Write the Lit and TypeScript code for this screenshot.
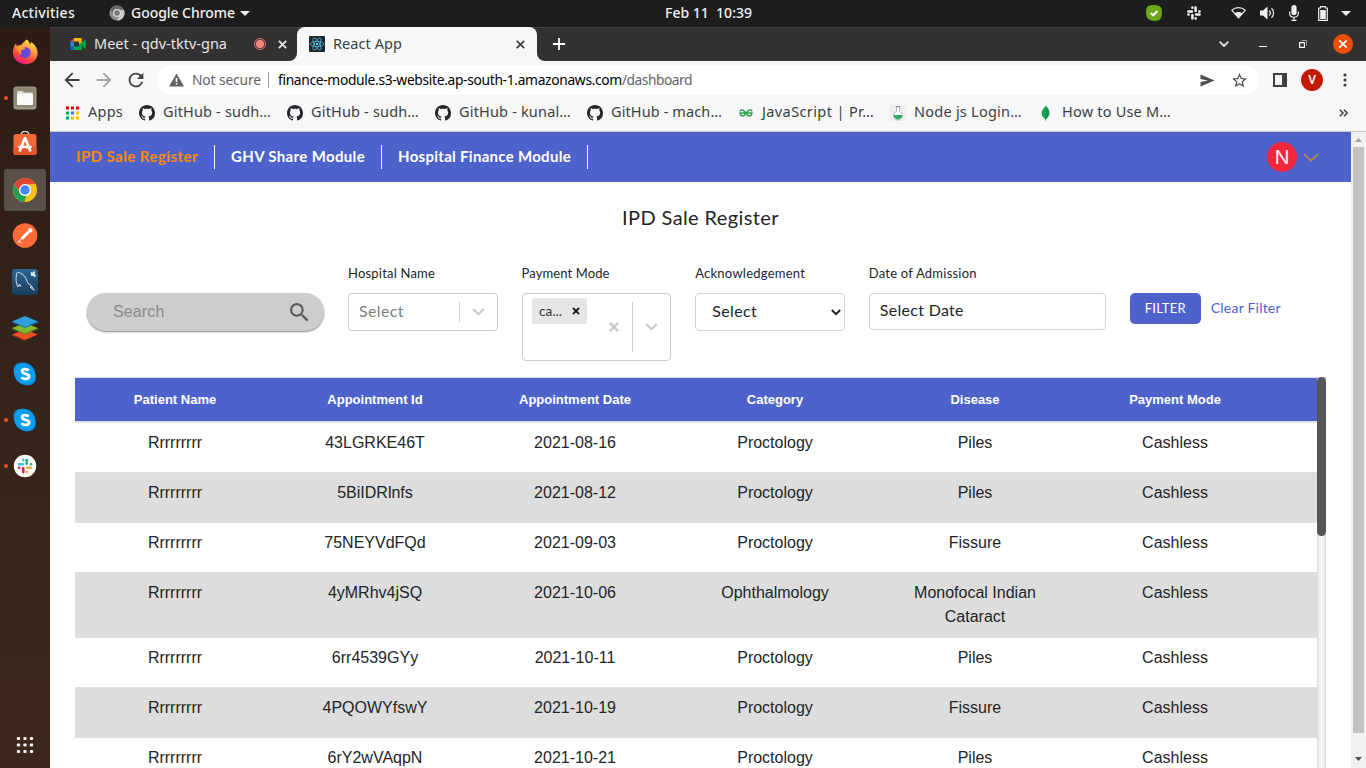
import { LitElement, html, css, svg } from "lit";
import { customElement, property } from "lit/decorators.js";
import { classMap } from "lit/directives/class-map.js";

/** Inline label that spreads its letters evenly over a given width. */
@customElement("fit-label")
class FitLabel extends LitElement {
  @property({ type: Number }) width = 0;
  @property() text = "";
  static styles = css`
    :host { display: inline-block; white-space: pre; flex: none; }
    .t { display: inline-block; white-space: pre; }
  `;
  render() {
    return html`<span class="t">${this.text}</span>`;
  }
  updated() {
    const t = this.renderRoot.querySelector(".t") as HTMLElement;
    t.style.letterSpacing = "0px";
    const natural = t.getBoundingClientRect().width;
    const step = (this.width - natural) / Math.max(1, this.text.length);
    t.style.letterSpacing = `${step.toFixed(3)}px`;
  }
}

const fit = (text: string, width: number) =>
  html`<fit-label .text=${text} .width=${width}></fit-label>`;

const github = svg`<path fill="#24292f" d="M8 0C3.58 0 0 3.58 0 8c0 3.54 2.29 6.53 5.47 7.59.4.07.55-.17.55-.38 0-.19-.01-.82-.01-1.49-2.01.37-2.53-.49-2.69-.94-.09-.23-.48-.94-.82-1.13-.28-.15-.68-.52-.01-.53.63-.01 1.08.58 1.23.82.72 1.21 1.87.87 2.33.66.07-.52.28-.87.51-1.07-1.78-.2-3.64-.89-3.64-3.95 0-.87.31-1.59.82-2.15-.08-.2-.36-1.02.08-2.12 0 0 .67-.21 2.2.82.64-.18 1.32-.27 2-.27s1.36.09 2 .27c1.53-1.04 2.2-.82 2.2-.82.44 1.1.16 1.92.08 2.12.51.56.82 1.27.82 2.15 0 3.07-1.87 3.75-3.65 3.95.29.25.54.73.54 1.48 0 1.07-.01 1.93-.01 2.2 0 .21.15.46.55.38A8.01 8.01 0 0 0 16 8c0-4.42-3.58-8-8-8z"/>`;
const appsGrid = svg`
  <path fill="#e00" d="M2 1.500h3v3H2zM7 1.500h3v3H7z"/><path fill="#e00" d="M12 1.500h3v3h-3z"/>
  <path fill="#00a651" d="M2 6.500h3v3H2z"/><path fill="#3b6cf6" d="M7 6.500h3v3H7z"/><path fill="#fb0" d="M12 6.500h3v3h-3z"/>
  <path fill="#00a651" d="M2 11.500h3v3H2z"/><path fill="#fb0" d="M7 11.500h3v3H7zM12 11.500h3v3h-3z"/>`;
const gfg = svg`<g fill="none" stroke="#2fa24f" stroke-width="1.500"><path d="M1.300 8h13.400M1.800 6.200c1.300-1.600 3.300-1.300 4.500 0L8 8M14.200 6.200c-1.300-1.600-3.300-1.300-4.500 0L8 8M2.200 8c0 3.400 3.600 3.600 4.800 1.600V8M13.800 8c0 3.400-3.600 3.600-4.800 1.600V8"/></g>`;
const flask = svg`<path fill="#eee" d="M0 0h16v16H0z"/><path fill="#fff" stroke="#b9b3c4" d="M6.500 1.500v5a4.400 4.400 0 1 0 3 0v-5"/><path fill="#27ae60" d="M3.600 10h8.800a4.400 4.400 0 0 1-8.800 0z"/><path stroke="#8d8799" stroke-width="1.200" d="M5.800 1.600h4.400"/>`;
const leaf = svg`<path fill="#10aa50" d="M7.500.5c2.500 2.800 4.300 5 3.800 8.300-.3 2.300-1.700 4-3.400 5.200l-.1 1.800h-.6l-.2-1.800C5 12.700 3.500 10.800 3.600 8.300 3.700 5 6 3.500 7.500.5z"/><path fill="#12924f" d="M7.500 1v14l.4-1c1.700-1.200 3.100-2.900 3.400-5.200C11.800 5.500 10 3.500 7.500 1z"/>`;

const bookmarks = [
  { icon: appsGrid, text: "Apps", w: 35 },
  { icon: github, text: "GitHub - sudh…", w: 108 },
  { icon: github, text: "GitHub - sudh…", w: 108 },
  { icon: github, text: "GitHub - kunal…", w: 112 },
  { icon: github, text: "GitHub - mach…", w: 111 },
  { icon: gfg, text: "JavaScript | Pr…", w: 112 },
  { icon: flask, text: "Node js Login…", w: 108 },
  { icon: leaf, text: "How to Use M…", w: 109 },
];

const slackMark = (a: string, b: string, c: string, d: string) => svg`
  <g stroke-linecap="round" stroke-width="3.600" fill="none">
    <path stroke="${a}" d="M2 7.700h5M7.700 2v.4"/>
    <path stroke="${b}" d="M12.300 2v5M17.600 7.700h.4"/>
    <path stroke="${c}" d="M18 12.300h-5M12.300 17.600v.4"/>
    <path stroke="${d}" d="M7.700 18v-5M2 12.300h.4"/>
  </g>`;

const skype = svg`
  <path fill="#0b7fd0" d="M7.200 2c7-2 15 2 16 10 2 6 0 11-5 12-7 2-15-3-16-11C.5 8 2 3 7.200 2z"/>
  <path fill="#0a9df0" d="M8.500 2.500c-4 .6-6.700 4-6.300 9.500.5 7 6.500 12 13 11.500 6-.4 9-5 8-11-1-7-7.500-11-14.700-10z"/>
  <path fill="none" stroke="#fff" stroke-width="2.800" d="M16.400 9.600c-1-2-6.300-2.200-6.300.6 0 3.400 7 1.800 7 5.200 0 3.200-6.200 3.200-7.600.7"/>`;

const dock = [
  { dot: false, on: false, art: svg`
    <defs><linearGradient id="f" x1=".8" y1="0" x2=".3" y2="1"><stop offset="0" stop-color="#fff44f"/><stop offset=".4" stop-color="#ff9640"/><stop offset=".7" stop-color="#ff4a3c"/><stop offset="1" stop-color="#e31587"/></linearGradient></defs>
    <path fill="url(#f)" d="M14.500.5c2 1 3 3 3.300 4.600 1-.3 1.200-1.200 1.200-2 4 2.500 7 7 6.600 12C25 21 20 25.500 13.500 25.200 6.500 25 1 20.600.9 13.500c0-3.500 1-6.500 3-9l.8 2.600C6 6 7.500 5.700 9 6c1-.6 3-3.400 5.500-5.500z"/>
    <circle cx="13" cy="13.500" r="5.600" fill="#6a45d8"/><path fill="#ff9c2b" d="M4.500 8c3-1.500 6-.3 9 .8-.5 1.500-2.200 1.800-4 2.300-1 2-.8 3.200.5 4.500-3-.5-5-3.500-5.500-7.600z"/>` },
  { dot: true, on: false, art: svg`
    <rect x="1.500" y="1.500" width="23" height="23" rx="3" fill="#a29c87"/><rect x="2.500" y="2.500" width="21" height="20" rx="2.500" fill="#8d8773"/>
    <path fill="#dcd9d0" d="M5 7.500c0-1 .6-1.500 1.500-1.500h4l1.500 1.500h7.500c1 0 1.500.6 1.500 1.500v9.500c0 1-.6 1.500-1.500 1.500h-13C5.500 20 5 19.500 5 18.500z"/><rect x="5" y="8.500" width="16" height="11.500" rx="1.500" fill="#faf9f7"/>` },
  { dot: false, on: false, art: svg`
    <path d="M9 4c0-5 8-5 8 0" fill="none" stroke="#e6dccd" stroke-width="1.300"/><rect x="1.500" y="3" width="23" height="21" rx="2.500" fill="#ee6a3a"/><path d="M1.500 16h23v5.500a2.500 2.500 0 0 1-2.500 2.500H4a2.500 2.500 0 0 1-2.500-2.500z" fill="#e4552a"/>
    <path fill="none" stroke="#fff" stroke-width="2.600" d="M7.500 20.500l5.300-13.200h.4l5.300 13.200M6.500 16h13"/>` },
  { dot: true, on: true, art: svg`
    <circle cx="13" cy="13" r="12" fill="#fbc116"/><path fill="#e04436" d="M2.600 7A12 12 0 0 1 23.400 7H13z"/><path fill="#e04436" d="M2.600 7H23.400L13 7.500 8 16z"/>
    <path fill="#1fa054" d="M2.600 7l5.200 9L13 19l1 .2L12.500 25A12 12 0 0 1 2.600 7z"/><circle cx="13" cy="13" r="6" fill="#fff"/><circle cx="13" cy="13" r="4.700" fill="#4285f4"/>` },
  { dot: false, on: false, art: svg`
    <circle cx="13" cy="12.500" r="12.300" fill="#ff6c37"/><path stroke="#fff" stroke-width="3" stroke-linecap="round" d="M10.500 15l5.500-5.500"/><path fill="none" stroke="#fff" stroke-width="1" d="M6 19h3.500M6 19l4.500-4.500"/><circle cx="18.300" cy="7.300" r="2.200" fill="#fff"/>` },
  { dot: false, on: false, art: svg`
    <defs><linearGradient id="q" x1="0" y1="0" x2="0" y2="1"><stop offset="0" stop-color="#2d6593"/><stop offset="1" stop-color="#183c5c"/></linearGradient></defs>
    <rect x="0" y="0" width="26" height="26" rx="3" fill="url(#q)"/><path fill="none" stroke="#dce6ee" stroke-width="1" d="M9 18l-1.500-3-1.500 3C3.500 13 4 9 4.500 5.500 4 3 7 3 9 4.500c5 2 5.500 8 7.500 10.500 2 .5 3.500 2 3.500 3l2.500 3.500M20 18h-2l3.500 3"/><path stroke="#dce6ee" stroke-width="2" d="M19 3.500l4.500 4M19 6h3V2.500"/>` },
  { dot: false, on: false, art: svg`
    <path fill="#e84f27" d="M0 19.500l13-5 13 5-13 5.500z"/><path fill="#b5331c" d="M0 19.500L13 25v1L0 20.500z"/><path fill="#83b82c" d="M0 13l13-5 13 5-13 5.500z"/><path fill="#5f911d" d="M0 13l13 5.500L26 13v1l-13 5.500L0 14z"/><path fill="#2f9fe0" d="M0 6.500L13 1l13 5.500L13 12z"/><path fill="#1674b5" d="M0 6.500L13 12l13-5.500v1L13 13 0 7.500z"/>` },
  { dot: false, on: false, art: skype },
  { dot: true, on: false, art: skype },
  { dot: true, on: false, art: svg`<circle cx="13" cy="13" r="11.200" fill="#fff"/><g transform="translate(5.400 5.400) scale(.76)">${slackMark("#36c5f0", "#2eb67d", "#ecb22e", "#e01e5a")}</g>` },
];

const columns = ["Patient Name", "Appointment Id", "Appointment Date", "Category", "Disease", "Payment Mode"];
const rows = [
  ["Rrrrrrrrr", "43LGRKE46T", "2021-08-16", "Proctology", "Piles", "Cashless"],
  ["Rrrrrrrrr", "5BiIDRlnfs", "2021-08-12", "Proctology", "Piles", "Cashless"],
  ["Rrrrrrrrr", "75NEYVdFQd", "2021-09-03", "Proctology", "Fissure", "Cashless"],
  ["Rrrrrrrrr", "4yMRhv4jSQ", "2021-10-06", "Ophthalmology", "Monofocal Indian Cataract", "Cashless"],
  ["Rrrrrrrrr", "6rr4539GYy", "2021-10-11", "Proctology", "Piles", "Cashless"],
  ["Rrrrrrrrr", "4PQOWYfswY", "2021-10-19", "Proctology", "Fissure", "Cashless"],
  ["Rrrrrrrrr", "6rY2wVAqpN", "2021-10-21", "Proctology", "Piles", "Cashless"],
];

@customElement("desktop-bar")
class DesktopBar extends LitElement {
  static styles = css`
    :host { display: grid; grid-template-columns: 1fr auto 1fr; align-items: start; height: 27px; background: #1d1d1d; color: #f0f0f0; font: 500 14px/26px "Noto Sans", sans-serif; }
    svg { display: block; flex: none; }
    .left, .right { display: flex; align-items: center; height: 26px; }
    .left { padding-left: 12px; }
    fit-label { height: 26px; line-height: 25px; }
    .app { margin: 0 6px 0 34px; }
    .caret { margin-left: 5px; }
    .right { justify-content: flex-end; padding-right: 15px; }
    .skype { margin-right: 25px; }
    .slack { margin-right: 30px; }
    .wifi { margin-right: 14px; }
    .vol { margin-right: 14px; }
    .mic { margin-right: 19px; }
    .bat { margin-right: 13px; }
    .clock { padding-left: 51px; }
  `;
  render() {
    return html`
      <div class="left">
        ${fit("Activities", 63)}
        <svg class="app" width="16" height="16" viewBox="0 0 16 16"><circle cx="8" cy="8" r="7.600" fill="#8b8b8b"/><path fill="#686868" d="M1.500 4A7.600 7.600 0 0 1 14.700 4.500H8L4.800 9.500z"/><path fill="#c9c9c9" d="M15 5a7.600 7.600 0 0 1-7 10.600l3.500-6.600V5z"/><circle cx="8" cy="8" r="4" fill="#ddd"/><circle cx="8" cy="8" r="2.800" fill="#777"/></svg>
        ${fit("Google Chrome", 104)}
        <svg class="caret" width="10" height="5" viewBox="0 0 10 5"><path fill="#f0f0f0" d="M0 0h10L5 5z"/></svg>
      </div>
      <div class="clock">${fit("Feb 11  10:39", 87)}</div>
      <div class="right">
        <svg class="skype" width="16" height="16" viewBox="0 0 16 16"><path fill="#69a917" d="M5 .2C9-.4 13 0 15 2.500c1.500 3 1 8 0 10.500-1.500 3-6 3.500-10 2.500C1 14 0 11 0 7 0 2.500 1.500.5 5 .2z"/><path fill="none" stroke="#fff" stroke-width="2" d="M4.700 8l2.400 2.300L11.500 6"/></svg>
        <svg class="slack" width="14" height="14" viewBox="0 0 20 20">${slackMark("#f0f0f0", "#f0f0f0", "#f0f0f0", "#f0f0f0")}</svg>
        <svg class="wifi" width="15" height="12" viewBox="0 0 15 12"><path fill="none" stroke="#f0f0f0" stroke-width="1.100" d="M.8 3.200C4.500-.2 10.500-.2 14.200 3.200L7.500 11z"/><path fill="#f0f0f0" d="M3.600 6.300c2.300-1.600 5.500-1.600 7.800 0L7.500 11.500z"/></svg>
        <svg class="vol" width="15" height="14" viewBox="0 0 15 14"><path fill="#f0f0f0" d="M0 4.500h3L7.500.5v13L3 9.500H0z"/><path fill="none" stroke="#f0f0f0" stroke-width="1.200" d="M9.300 4.500c1.300 1.500 1.300 3.500 0 5M11.500 2.300c2.800 2.600 2.800 6.800 0 9.400"/></svg>
        <svg class="mic" width="10" height="16" viewBox="0 0 10 16"><rect x="2.400" y="0" width="5.200" height="10" rx="2.600" fill="#f0f0f0"/><path fill="none" stroke="#f0f0f0" stroke-width="1.200" d="M.7 6.500v2c0 5 8.600 5 8.600 0v-2M5 12v3M2.500 15.300h5"/></svg>
        <svg class="bat" width="10" height="15" viewBox="0 0 10 15"><path fill="none" stroke="#f0f0f0" stroke-width="1.200" d="M.7 2h2V.6h4.600V2h2v12.300H.7z"/><path fill="#f0f0f0" d="M2.200 4h5.600v9H2.200z"/></svg>
        <svg width="10" height="5" viewBox="0 0 10 5"><path fill="#f0f0f0" d="M0 0h10L5 5z"/></svg>
      </div>`;
  }
}

@customElement("app-dock")
class AppDock extends LitElement {
  static styles = css`
    :host { display: flex; flex-direction: column; width: 50px; box-sizing: border-box; padding-top: 2px; background: linear-gradient(#2c1c15, #34231a 40%, #3d291c); }
    .slot { height: 46px; display: grid; grid-template-columns: 4px 42px 4px; align-items: center; }
    .dot { width: 4px; height: 4px; border-radius: 50%; margin-left: 3.500px; }
    .run .dot { background: #e95420; }
    .tile { height: 42px; border-radius: 3px; display: grid; place-items: center; }
    .on .tile { background: #5b4f49; }
    svg { display: block; }
    .grid { margin: auto 0 14px 16px; }
  `;
  render() {
    return html`
      ${dock.map((d) => html`<div class=${classMap({ slot: true, run: d.dot, on: d.on })}>
        <span class="dot"></span><span class="tile"><svg width="26" height="26" viewBox="0 0 26 26">${d.art}</svg></span></div>`)}
      <svg class="grid" width="18" height="18" viewBox="0 0 18 18">
        ${[2.5, 9, 15.5].map((y) => [2.5, 9, 15.5].map((x) => svg`<rect x="${x - 1.6}" y="${y - 1.6}" width="3.200" height="3.200" rx=".8" fill="#f2efec"/>`))}
      </svg>`;
  }
}

@customElement("browser-chrome")
class BrowserChrome extends LitElement {
  static styles = css`
    :host { display: block; font: 14.500px/20px "Noto Sans", sans-serif; color: #3c4043; }
    svg { display: block; flex: none; }
    .tabs { display: flex; align-items: center; height: 34px; background: #333132; box-shadow: inset 0 1px #454344; }
    .tab { box-sizing: border-box; height: 34px; display: flex; align-items: center; }
    .tab fit-label { padding-bottom: 2px; }
    .meet { width: 247px; padding-left: 20px; color: #e6e6e6; background: #333132; border-bottom-right-radius: 8px; box-shadow: inset 0 1px #454344; }
    .under { background: #f7f7f7; width: 247px; }
    .meet .gap { width: 27px; }
    .react { width: 240px; padding-left: 12px; background: #f7f7f7; border-radius: 8px 8px 0 0; }
    .react .gap { flex: 1; }
    .react .x { margin-right: 12px; }
    .fav { margin-right: 8px; }
    .rec { margin-right: 12px; }
    .after { flex: 1; display: flex; align-items: center; height: 34px; padding: 0 13px 0 16px; background: #333132; border-bottom-left-radius: 8px; box-shadow: inset 0 1px #454344; }
    .afterwrap { flex: 1; display: flex; background: #f7f7f7; }
    .sp { flex: 1; }
    .down { margin-right: 30px; }
    .min { margin-right: 32px; }
    .res { margin-right: 26px; }
    .tools { display: flex; align-items: center; height: 38px; background: #f7f7f7; padding-left: 14px; }
    .back { margin-right: 16px; }
    .fwd { margin-right: 16px; }
    .re { margin-right: 14px; }
    .omni { display: flex; align-items: center; width: 1100px; height: 30px; border-radius: 15px; background: #fff; box-sizing: border-box; padding: 0 11px; font-size: 13.800px; }
    .omni fit-label { padding-bottom: 1px; }
    .warn { margin-right: 8px; }
    .ns { color: #5f6368; }
    .bar { width: 1px; height: 16px; background: #9aa0a6; margin: 0 9px 0 7px; }
    .host { color: #000; }
    .path { color: #5f6368; }
    .send { margin-right: 17px; }
    .panel { margin: 0 14px 0 15px; }
    .me { width: 22px; height: 22px; border-radius: 50%; background: #c41c00; color: #fff; font: 500 12px/22px Roboto, sans-serif; text-align: center; margin-right: 20px; }
    .marks { display: flex; align-items: center; gap: 16px; height: 32px; box-sizing: border-box; padding: 0 18px 4px 14px; background: #f7f7f7; }
    .edge { height: 1px; background: #c9cace; }
    .mark { display: flex; align-items: center; gap: 8px; }
    .mark fit-label { height: 20px; margin: -2px 0 0; padding-bottom: 2px; }
  `;
  render() {
    const close = (c: string) => html`<svg class="x" width="9" height="9" viewBox="0 0 9 9"><path stroke="${c}" stroke-width="1.700" d="M.8.8l7.400 7.400M8.200.8L.8 8.200"/></svg>`;
    return html`
      <div class="tabs">
        <div class="under"><div class="tab meet">
          <svg class="fav" width="16" height="16" viewBox="0 0 16 16"><path fill="#00ac47" d="M11 8l3.800-4.400c.4-.3.800 0 .8.500v7.800c0 .5-.4.800-.8.5z"/><path fill="#0066da" d="M.5 10.500h3.500V14H1.800C1 14 .5 13.500.5 12.700z"/><path fill="#e94235" d="M.5 5.500L4 2v3.500z"/><path fill="#2684fc" d="M.5 5.500H4v5H.5z"/><path fill="#ffba00" d="M4 2h6.500c.8 0 1.300.5 1.300 1.300V7L9 8V5.500H4z"/><path fill="#00ac47" d="M4 10.500h5V8l2.800-1v5.700c0 .8-.5 1.300-1.300 1.300H4z"/></svg>
          ${fit("Meet - qdv-tktv-gna", 133)}<span class="gap"></span>
          <svg class="rec" width="12" height="12" viewBox="0 0 12 12"><circle cx="6" cy="6" r="4.200" fill="#f6837c"/><circle cx="6" cy="6" r="5.500" fill="none" stroke="#f6837c" stroke-width=".8"/></svg>
          ${close("#e8e8e8")}
        </div></div>
        <div class="tab react">
          <svg class="fav" width="16" height="16" viewBox="0 0 16 16"><rect width="16" height="16" rx="1" fill="#20232a"/><g fill="none" stroke="#5ccfee" stroke-width=".7"><ellipse cx="8" cy="8" rx="6.800" ry="2.600"/><ellipse cx="8" cy="8" rx="6.800" ry="2.600" transform="rotate(60 8 8)"/><ellipse cx="8" cy="8" rx="6.800" ry="2.600" transform="rotate(120 8 8)"/></g><circle cx="8" cy="8" r="1.200" fill="#61dafb"/></svg>
          ${fit("React App", 69)}<span class="gap"></span>${close("#3c4043")}
        </div>
        <div class="afterwrap"><div class="after">
          <svg width="12" height="12" viewBox="0 0 12 12"><path stroke="#fff" stroke-width="1.800" d="M6 0v12M0 6h12"/></svg>
          <span class="sp"></span>
          <svg class="down" width="10" height="6" viewBox="0 0 10 6"><path fill="none" stroke="#f0f0f0" stroke-width="1.700" d="M.7.700L5 5 9.300.7"/></svg>
          <svg class="min" width="8" height="8" viewBox="0 0 8 8"><path fill="#f0f0f0" d="M0 6h8v1H0z"/></svg>
          <svg class="res" width="8" height="8" viewBox="0 0 8 8"><path fill="none" stroke="#fff" stroke-width="1.100" d="M.6 2.600h4.800v4.800H.6z"/><path fill="none" stroke="#aaa" stroke-width=".9" d="M2.500.5h5v5"/></svg>
          <svg width="20" height="20" viewBox="0 0 20 20"><circle cx="10" cy="10" r="10" fill="#ee4d0b"/><path stroke="#fff" stroke-width="1.700" d="M6.300 6.300l7.400 7.400M13.700 6.300l-7.400 7.400"/></svg>
        </div></div>
      </div>
      <div class="tools">
        <svg class="back" width="16" height="16" viewBox="3.500 3.500 17 17"><path fill="#3c4043" d="M20 11H7.830l5.590-5.590L12 4l-8 8 8 8 1.410-1.410L7.830 13H20z"/></svg>
        <svg class="fwd" width="16" height="16" viewBox="3.500 3.500 17 17"><path fill="#a4a6a8" d="M12 4l-1.410 1.410L16.170 11H4v2h12.170l-5.580 5.590L12 20l8-8z"/></svg>
        <svg class="re" width="16" height="16" viewBox="3.300 3.300 17.400 17.400"><path fill="#3c4043" d="M17.650 6.350A7.960 7.960 0 0 0 12 4a8 8 0 1 0 7.730 10h-2.080A6 6 0 1 1 12 6c1.660 0 3.140.69 4.220 1.780L13 11h7V4z"/></svg>
        <div class="omni">
          <svg class="warn" width="15" height="14" viewBox="0 0 15 14"><path fill="#5f6368" d="M7.500.5L15 13.500H0z"/><path fill="#fff" d="M6.700 5h1.600v4H6.700zM6.700 10h1.600v1.600H6.700z"/></svg>
          <span class="ns">${fit("Not secure", 69)}</span><span class="bar"></span>
          <span class="host">${fit("finance-module.s3-website.ap-south-1.amazonaws.com", 344)}</span><span class="path">${fit("/dashboard", 70)}</span>
          <span class="sp"></span>
          <svg class="send" width="15" height="13" viewBox="0 0 15 13"><path fill="#4a4d51" d="M.5.5L14.500 6.500.5 12.500V8L8 6.500.5 5z"/></svg>
          <svg width="15" height="15" viewBox="2 2 20 20"><path fill="#4a4d51" d="M22 9.240l-7.190-.62L12 2 9.190 8.630 2 9.240l5.460 4.730L5.820 21 12 17.270 18.180 21l-1.630-7.030zM12 15.400l-3.760 2.270 1-4.280-3.320-2.880 4.380-.38L12 6.100l1.710 4.040 4.380.38-3.320 2.880 1 4.280z"/></svg>
        </div>
        <svg class="panel" width="14" height="14" viewBox="0 0 14 14"><path fill="#3c4043" d="M0 0h14v14H0zM2 2v10h7V2z" fill-rule="evenodd"/></svg>
        <span class="me">V</span>
        <svg width="4" height="14" viewBox="0 0 4 14"><g fill="#3c4043"><circle cx="2" cy="2" r="1.600"/><circle cx="2" cy="7" r="1.600"/><circle cx="2" cy="12" r="1.600"/></g></svg>
      </div>
      <div class="marks">
        ${bookmarks.map((b) => html`<div class="mark"><svg width="16" height="16" viewBox="0 0 16 16">${b.icon}</svg>${fit(b.text, b.w)}</div>`)}
        <span class="sp"></span>
        <svg width="9" height="8" viewBox="0 0 9 8"><path fill="none" stroke="#3c4043" stroke-width="1.500" d="M.8.800L4 4 .8 7.200M5 .800L8.200 4 5 7.200"/></svg>
      </div>
      <div class="edge"></div>`;
  }
}

@customElement("sale-page")
class SalePage extends LitElement {
  static styles = css`
    :host { display: block; background: #fff; color: #212529; font: 16px/24px Lato, sans-serif; overflow: hidden; }
    svg { display: block; flex: none; }
    .nav { display: flex; align-items: center; height: 50px; background: #4d63cb; color: #fff; font-weight: 700; font-size: 15px; padding-left: 26px; }
    .item { display: flex; align-items: center; height: 24px; padding-right: 16px; margin-right: 16px; border-right: 1px solid #fff; }
    .item fit-label { padding-bottom: 2px; }
    .item.cur { color: #f98a06; }
    .sp { flex: 1; }
    .user { width: 30px; height: 30px; border-radius: 50%; background: #f3263c; font: 20px/29px "Noto Sans", sans-serif; text-align: center; margin-right: 6px; }
    .chev { margin-right: 32px; }
    .title { display: flex; justify-content: center; font-size: 20px; line-height: 24px; padding-top: 23px; }
    .filters { display: flex; gap: 24px; height: 114px; padding: 46px 0 0 37px; margin-top: -12px; }
    .field { display: flex; flex-direction: column; width: 149.600px; }
    .wide { width: 237px; }
    .lab { height: 30px; font-size: 13px; line-height: 20px; }
    .lab fit-label { vertical-align: top; }
    .search { display: flex; align-items: center; height: 38px; border-radius: 19px; background: #cdcdcd; color: #8b8b8b; box-shadow: 0 1px 2px #8a8a8a; font-family: "Liberation Sans", sans-serif; padding: 0 14px 0 26px; justify-content: space-between; }
    .box { display: flex; align-items: center; box-sizing: border-box; height: 38px; border: 1px solid #ccc; border-radius: 4px; background: #fff; }
    .box > fit-label, .ph fit-label { padding-bottom: 2px; }
    .ph { color: #808080; padding-left: 10px; flex: 1; line-height: 22px; }
    .div { width: 1px; align-self: stretch; margin: 8px 0; background: #ccc; }
    .ar { margin: 0 12px; }
    .multi { height: 68px; }
    .chip { display: flex; align-items: center; align-self: flex-start; gap: 10px; box-sizing: border-box; width: 55px; height: 26px; margin: 4px 0 0 9.500px; padding-left: 7px; border-radius: 2px; background: #e6e6e6; color: #333; font-size: 13.600px; }
    .clr { margin-right: 13px; }
    .native { border-color: #ced4da; justify-content: space-between; padding: 0 3px 0 16px; }
    .date { height: 37px; padding-left: 10px; border-color: #ced4da; }
    .date fit-label { padding-bottom: 3px; }
    .acts { display: flex; align-items: flex-start; gap: 10px; padding-top: 30px; }
    .btn { width: 71px; height: 31px; border-radius: 5px; background: #4d63cb; color: #fff; font-size: 13px; line-height: 30px; text-align: center; }
    .link { color: #4d63cb; font-size: 14px; line-height: 30px; }
    .area { display: flex; margin-left: 25px; height: 400px; font-family: "Liberation Sans", sans-serif; }
    .table { width: 1242px; }
    .row { display: grid; grid-template-columns: repeat(6, 200px) 42px; box-sizing: border-box; min-height: 50px; padding: 8px 0; border-top: 1px solid #dee2e6; }
    .row span, .head span { text-align: center; }
    .row span { padding: 0 32px; }
    .alt { background: #ddd; }
    .head { display: grid; grid-template-columns: repeat(6, 200px) 42px; height: 43px; background: #4d63cb; border-top: 1px solid #dee2e6; border-bottom: 1px solid #dee2e6; color: #fff; font-weight: 700; font-size: 13px; line-height: 43px; }
    .track { width: 9px; background: #f5f5f5; box-shadow: inset 0 0 3px rgba(0, 0, 0, .3); }
    .thumb { height: 159px; border-radius: 5px; background: #555; }
  `;
  render() {
    const arrow = html`<svg class="ar" width="13" height="8" viewBox="0 0 13 8"><path fill="none" stroke="#ccc" stroke-width="2.200" stroke-linecap="round" stroke-linejoin="round" d="M1.800 1.600l4.700 4.600 4.700-4.600"/></svg>`;
    return html`
      <div class="nav">
        <span class="item cur">${fit("IPD Sale Register", 122)}</span>
        <span class="item">${fit("GHV Share Module", 134)}</span>
        <span class="item">${fit("Hospital Finance Module", 173)}</span>
        <span class="sp"></span><span class="user">N</span>
        <svg class="chev" width="16" height="9" viewBox="0 0 16 9"><path fill="none" stroke="#c08a4a" stroke-width="1.600" d="M1 1l7 6.800L15 1"/></svg>
      </div>
      <div class="title">${fit("IPD Sale Register", 157)}</div>
      <div class="filters">
        <div class="field wide"><div class="lab"></div>
          <div class="search">${fit("Search", 51.5)}<svg width="21" height="21" viewBox="2 2 20 20"><path fill="#5a5a5a" d="M15.500 14h-.79l-.28-.27A6.470 6.470 0 0 0 16 9.500 6.500 6.500 0 1 0 9.500 16c1.610 0 3.090-.59 4.230-1.570l.27.28v.79l5 4.990L20.490 19zm-6 0C7.010 14 5 11.990 5 9.500S7.010 5 9.500 5 14 7.010 14 9.500 11.990 14 9.500 14z"/></svg></div></div>
        <div class="field"><div class="lab">${fit("Hospital Name", 87)}</div>
          <div class="box"><span class="ph">${fit("Select", 45)}</span><span class="div"></span>${arrow}</div></div>
        <div class="field"><div class="lab">${fit("Payment Mode", 88)}</div>
          <div class="box multi"><span class="chip">${fit("ca...", 23)}<svg width="8" height="8" viewBox="0 0 8 8"><path stroke="#222" stroke-width="2" d="M1 1l6 6M7 1L1 7"/></svg></span>
            <span class="sp"></span><svg class="clr" width="10" height="10" viewBox="0 0 10 10"><path stroke="#ccc" stroke-width="2.600" d="M.8.800l8.400 8.400M9.200.800L.8 9.200"/></svg><span class="div"></span>${arrow}</div></div>
        <div class="field"><div class="lab">${fit("Acknowledgement", 110)}</div>
          <div class="box native">${fit("Select", 45)}<svg width="10" height="7" viewBox="0 0 10 7"><path fill="none" stroke="#212529" stroke-width="2" d="M.8 1L5 5.200 9.200 1"/></svg></div></div>
        <div class="field wide"><div class="lab">${fit("Date of Admission", 108)}</div>
          <div class="box date">${fit("Select Date", 84)}</div></div>
        <div class="acts"><span class="btn">${fit("FILTER", 41)}</span><span class="link">${fit("Clear Filter", 70)}</span></div>
      </div>
      <div class="area">
        <div class="table">
          <div class="head">${columns.map((c) => html`<span>${c}</span>`)}</div>
          ${rows.map((r, i) => html`<div class=${classMap({ row: true, alt: i % 2 === 1 })}>${r.map((c) => html`<span>${c}</span>`)}</div>`)}
        </div>
        <div class="track"><div class="thumb"></div></div>
      </div>`;
  }
}

@customElement("app-root")
class AppRoot extends LitElement {
  static styles = css`
    :host { display: flex; flex-direction: column; width: 1366px; height: 768px; overflow: hidden; }
    .desk { display: flex; flex: 1; min-height: 0; }
    app-dock { flex: none; }
    .win { flex: 1; display: flex; flex-direction: column; min-width: 0; background: #fff; }
    browser-chrome { flex: none; }
    .view { flex: 1; display: flex; min-height: 0; }
    sale-page { flex: 1; min-width: 0; }
    .bar { width: 15px; box-sizing: border-box; display: flex; flex-direction: column; align-items: center; background: #f1f1f1; padding-top: 6px; }
    .thumb { width: 11px; height: 586px; background: #c1c1c1; margin: 5px 0 24px; }
    svg { display: block; }
  `;
  render() {
    return html`
      <desktop-bar></desktop-bar>
      <div class="desk">
        <app-dock></app-dock>
        <div class="win">
          <browser-chrome></browser-chrome>
          <div class="view">
            <sale-page></sale-page>
            <div class="bar">
              <svg width="7" height="4" viewBox="0 0 7 4"><path fill="#a3a3a3" d="M0 4h7L3.500 0z"/></svg>
              <div class="thumb"></div>
              <svg width="7" height="4" viewBox="0 0 7 4"><path fill="#505050" d="M0 0h7L3.500 4z"/></svg>
            </div>
          </div>
        </div>
      </div>`;
  }
}
